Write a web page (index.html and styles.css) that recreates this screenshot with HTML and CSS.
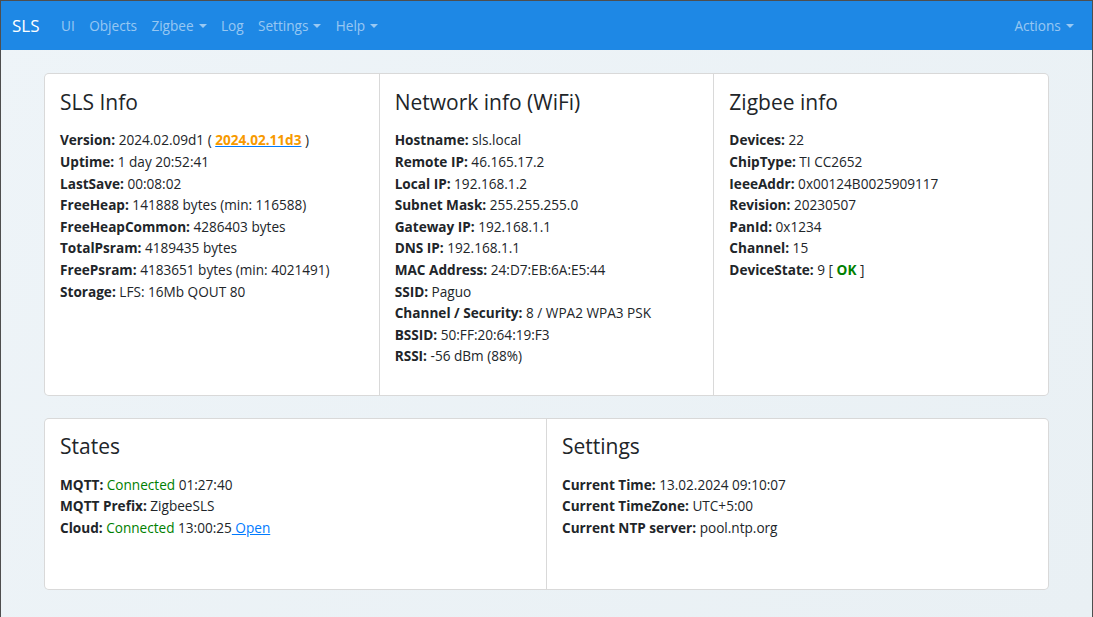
FILE: index.html
```html
<!DOCTYPE html>
<html lang="en">
<head>
<meta charset="utf-8">
<title>SLS</title>
<link rel="stylesheet" href="styles.css">
</head>
<body>
<div class="frame">
  <nav class="navbar">
    <a class="brand" href="#">SLS</a>
    <ul class="nav nav-left">
      <li><a class="nav-link" href="#">UI</a></li>
      <li><a class="nav-link" href="#">Objects</a></li>
      <li><a class="nav-link dropdown" href="#">Zigbee</a></li>
      <li><a class="nav-link" href="#">Log</a></li>
      <li><a class="nav-link dropdown" href="#">Settings</a></li>
      <li><a class="nav-link dropdown" href="#">Help</a></li>
    </ul>
    <ul class="nav nav-right">
      <li><a class="nav-link dropdown" href="#">Actions</a></li>
    </ul>
  </nav>

  <main class="container">
    <div class="card-group card-group-tall">
      <section class="card">
        <div class="card-body">
          <h4 class="card-title">SLS Info</h4>
          <div class="info">
            <div><b>Version:</b> 2024.02.09d1 ( <a class="link" href="#"><b class="orange">2024.02.11d3</b></a> )</div>
            <div><b>Uptime:</b> 1 day 20:52:41</div>
            <div><b>LastSave:</b> 00:08:02</div>
            <div><b>FreeHeap:</b> 141888 bytes (min: 116588)</div>
            <div><b>FreeHeapCommon:</b> 4286403 bytes</div>
            <div><b>TotalPsram:</b> 4189435 bytes</div>
            <div><b>FreePsram:</b> 4183651 bytes (min: 4021491)</div>
            <div><b>Storage:</b> LFS: 16Mb QOUT 80</div>
          </div>
        </div>
      </section>
      <section class="card">
        <div class="card-body">
          <h4 class="card-title">Network info (WiFi)</h4>
          <div class="info">
            <div><b>Hostname:</b> sls.local</div>
            <div><b>Remote IP:</b> 46.165.17.2</div>
            <div><b>Local IP:</b> 192.168.1.2</div>
            <div><b>Subnet Mask:</b> 255.255.255.0</div>
            <div><b>Gateway IP:</b> 192.168.1.1</div>
            <div><b>DNS IP:</b> 192.168.1.1</div>
            <div><b>MAC Address:</b> 24:D7:EB:6A:E5:44</div>
            <div><b>SSID:</b> Paguo</div>
            <div><b>Channel / Security:</b> 8 / WPA2 WPA3 PSK</div>
            <div><b>BSSID:</b> 50:FF:20:64:19:F3</div>
            <div><b>RSSI:</b> -56 dBm (88%)</div>
          </div>
        </div>
      </section>
      <section class="card">
        <div class="card-body">
          <h4 class="card-title">Zigbee info</h4>
          <div class="info">
            <div><b>Devices:</b> 22</div>
            <div><b>ChipType:</b> TI CC2652</div>
            <div><b>IeeeAddr:</b> 0x00124B0025909117</div>
            <div><b>Revision:</b> 20230507</div>
            <div><b>PanId:</b> 0x1234</div>
            <div><b>Channel:</b> 15</div>
            <div><b>DeviceState:</b> 9 [ <b class="green">OK</b> ]</div>
          </div>
        </div>
      </section>
    </div>

    <div class="card-group card-group-short">
      <section class="card">
        <div class="card-body">
          <h4 class="card-title">States</h4>
          <div class="info">
            <div><b>MQTT:</b> <span class="green">Connected</span> 01:27:40</div>
            <div><b>MQTT Prefix:</b> ZigbeeSLS</div>
            <div><b>Cloud:</b> <span class="green">Connected</span> 13:00:25<a class="link" href="#"> Open</a></div>
          </div>
        </div>
      </section>
      <section class="card">
        <div class="card-body">
          <h4 class="card-title">Settings</h4>
          <div class="info">
            <div><b>Current Time:</b> 13.02.2024 09:10:07</div>
            <div><b>Current TimeZone:</b> UTC+5:00</div>
            <div><b>Current NTP server:</b> pool.ntp.org</div>
          </div>
        </div>
      </section>
    </div>
  </main>
</div>
</body>
</html>
```

FILE: styles.css
```css
html {
  font-size: 14.4px;
}

body {
  margin: 0;
  font-family: "Open Sans", "Noto Sans", "Liberation Sans", sans-serif;
  font-size: 13.6px;
  line-height: 21.6px;
  color: #212529;
  background: #edf3f7;
}

.frame {
  min-height: 617px;
  box-sizing: border-box;
  border: 1px solid #4e4e4e;
  border-bottom: 0;
  background: linear-gradient(135deg, #eef4f8 0%, #e9f0f4 100%);
}

.navbar {
  display: flex;
  align-items: center;
  height: 49px;
  padding: 0 11px;
  background: #1e88e5;
}

.brand {
  color: #fff;
  font-size: 17px;
  text-decoration: none;
  margin-right: 14.4px;
}

.nav {
  display: flex;
  list-style: none;
  margin: 0;
  padding: 0;
}

.nav-right {
  margin-left: auto;
}

.nav-link {
  display: block;
  padding: 7px 7.2px;
  color: rgba(255, 255, 255, 0.55);
  text-decoration: none;
}

.dropdown::after {
  content: "";
  display: inline-block;
  margin-left: 5px;
  vertical-align: 3px;
  border-top: 4.3px solid;
  border-left: 4.3px solid transparent;
  border-right: 4.3px solid transparent;
}

.container {
  padding: 23px 43px 0;
}

.card-group {
  display: flex;
}

.card-group-tall {
  margin-bottom: 22px;
}

.card {
  flex: 1 0 0%;
  background: #fff;
  border: 1px solid rgba(0, 0, 0, 0.15);
}

.card + .card {
  border-left: 0;
}

.card:first-child {
  border-radius: 5px 0 0 5px;
}

.card:last-child {
  border-radius: 0 5px 5px 0;
}

.card-group-tall .info {
  margin-bottom: 13.4px;
}

.card-group-short .card {
  min-height: 170px;
}

.card-group-short .card-body {
  padding-top: 14px;
}

.card-body {
  padding: 15px;
}

.card-title {
  margin: 0 0 14.4px;
  font-size: 21px;
  line-height: 26px;
  font-weight: 400;
}

.info {
  margin-bottom: 14.4px;
}

b {
  font-weight: 700;
}

.link {
  color: #007bff;
  text-decoration: underline;
}

.orange {
  color: #f79a00;
}

.green {
  color: #008000;
}
```
